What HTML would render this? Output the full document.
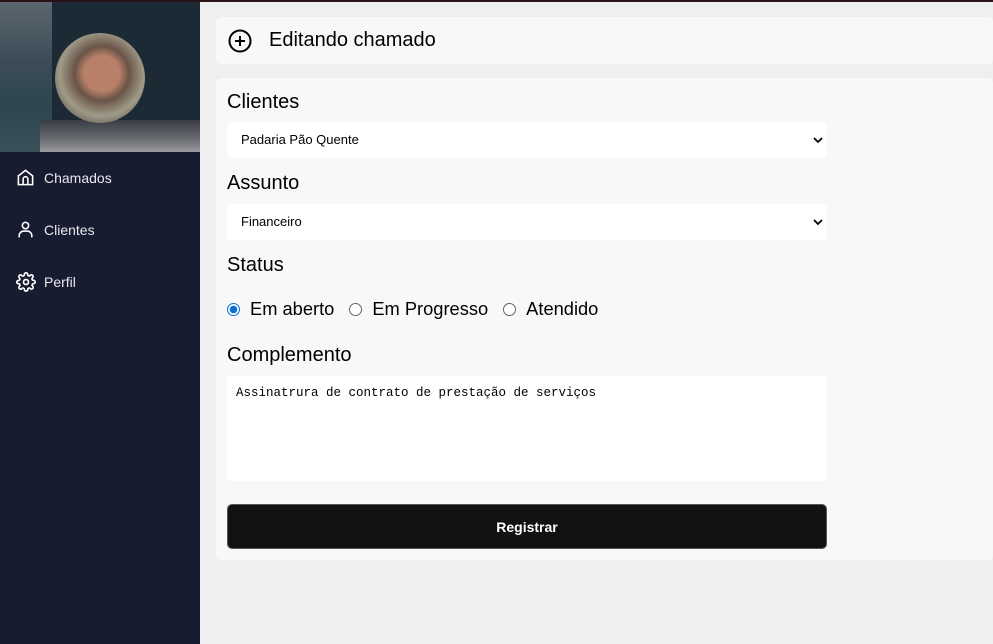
<!DOCTYPE html>
<html><head><meta charset="utf-8"><style>
*{box-sizing:border-box;margin:0;padding:0}
body{width:993px;height:644px;overflow:hidden;background:#efefef;font-family:"Liberation Sans",Arial,sans-serif;position:relative}
.topbar{position:absolute;left:0;top:0;width:993px;height:2px;background:#2a1418}
.side{position:absolute;left:0;top:0;width:200px;height:644px;background:#181c30}
.hero{position:absolute;left:0;top:2px;width:200px;height:150px;background:linear-gradient(180deg,#5a6670 0%,#3c4c56 40%,#2d4650 70%,#3a5058 100%);overflow:hidden}
.screen{position:absolute;left:52px;top:0;width:148px;height:118px;background:#1c2a36}
.kb{position:absolute;left:40px;top:118px;width:160px;height:32px;background:linear-gradient(180deg,#3a3c44 0%,#6a6c72 60%,#9a9ca0 100%)}
.avatar{position:absolute;left:55px;top:31px;width:90px;height:90px;border-radius:50%;background:radial-gradient(circle at 52% 45%,#b88068 0 26%,#6a5448 40%,#a09a88 62%,#2a2a2a 100%)}
.nav{position:absolute;left:16px;color:#e8e8ee;font-size:14px;display:flex;align-items:center;gap:9px}
.card{position:absolute;left:216px;width:777px;background:#f8f8f8;border-radius:5px}
.title{top:17px;height:47px;display:flex;align-items:center;padding-left:12px;font-size:20px;color:#000;gap:17px}
.form{top:78px;height:482px}
.lbl{position:absolute;left:11px;font-size:20px;color:#000}
.sel{position:absolute;left:11px;width:600px;height:36px;background:#fff;border-radius:4px;font-size:13px;padding-left:14px;line-height:36px;color:#000}
.sel svg{position:absolute;right:4px;top:13px}
.radio{position:absolute;top:220px;left:11px;font-size:18.3px;display:flex;align-items:center}
.r{width:13px;height:13px;border-radius:50%;border:1px solid #666;background:#fff;display:inline-block;margin-right:10px}
.r.on{border:1px solid #0b6fd6;background:radial-gradient(circle,#0b6fd6 0 3.5px,#fff 4px)}
.ta{position:absolute;left:11px;top:298px;width:600px;height:105px;background:#fff;border-radius:4px;font-family:"Liberation Mono",monospace;font-size:12.5px;padding:10px 9px}
.btn{position:absolute;left:11px;top:426px;width:600px;height:45px;background:#121212;border-radius:5px;color:#fff;font-size:14px;font-weight:bold;display:flex;align-items:center;justify-content:center;border:1px solid #555}
</style></head><body>
<div class="side">
 <div class="hero"><div class="screen"></div><div class="kb"></div><div class="avatar"></div></div>
 <div class="nav" style="top:168px"><svg width="19" height="19" viewBox="0 0 24 24" fill="none" stroke="#fff" stroke-width="2"><path d="M3 10l9-7 9 7v11H3z"/><path d="M9 21v-7a3 3 0 0 1 6 0v7"/></svg>Chamados</div>
 <div class="nav" style="top:220px"><svg width="19" height="19" viewBox="0 0 24 24" fill="none" stroke="#fff" stroke-width="2"><circle cx="12" cy="7" r="4"/><path d="M4 22v-2a6 6 0 0 1 6-6h4a6 6 0 0 1 6 6v2"/></svg>Clientes</div>
 <div class="nav" style="top:272px;gap:8px"><svg width="20" height="20" viewBox="0 0 24 24" fill="none" stroke="#fff" stroke-width="2"><circle cx="12" cy="12" r="3"/><path d="M19.4 15a1.7 1.7 0 0 0 .3 1.8l.1.1a2 2 0 1 1-2.8 2.8l-.1-.1a1.7 1.7 0 0 0-1.8-.3 1.7 1.7 0 0 0-1 1.5V21a2 2 0 1 1-4 0v-.1a1.7 1.7 0 0 0-1.1-1.5 1.7 1.7 0 0 0-1.8.3l-.1.1a2 2 0 1 1-2.8-2.8l.1-.1a1.7 1.7 0 0 0 .3-1.8 1.7 1.7 0 0 0-1.5-1H3a2 2 0 1 1 0-4h.1a1.7 1.7 0 0 0 1.5-1.1 1.7 1.7 0 0 0-.3-1.8l-.1-.1a2 2 0 1 1 2.8-2.8l.1.1a1.7 1.7 0 0 0 1.8.3H9a1.7 1.7 0 0 0 1-1.5V3a2 2 0 1 1 4 0v.1a1.7 1.7 0 0 0 1 1.5 1.7 1.7 0 0 0 1.8-.3l.1-.1a2 2 0 1 1 2.8 2.8l-.1.1a1.7 1.7 0 0 0-.3 1.8V9a1.7 1.7 0 0 0 1.5 1H21a2 2 0 1 1 0 4h-.1a1.7 1.7 0 0 0-1.5 1z"/></svg>Perfil</div>
</div>
<div class="topbar"></div>
<div class="card title"><svg width="24" height="24" viewBox="0 0 24 24" fill="none" stroke="#000" stroke-width="2"><circle cx="12" cy="12" r="10.5"/><path d="M12 7v10M7 12h10"/></svg>Editando chamado</div>
<div class="card form">
 <div class="lbl" style="top:13px">Clientes</div>
 <div class="sel" style="top:44px">Padaria Pão Quente<svg width="10" height="10" viewBox="0 0 10 10"><path d="M1 3l4 4 4-4" fill="none" stroke="#000" stroke-width="1.8"/></svg></div>
 <div class="lbl" style="top:94px">Assunto</div>
 <div class="sel" style="top:126px">Financeiro<svg width="10" height="10" viewBox="0 0 10 10"><path d="M1 3l4 4 4-4" fill="none" stroke="#000" stroke-width="1.8"/></svg></div>
 <div class="lbl" style="top:176px">Status</div>
 <div class="radio"><span class="r on"></span>Em aberto<span class="r" style="margin-left:15px"></span>Em Progresso<span class="r" style="margin-left:15px"></span>Atendido</div>
 <div class="lbl" style="top:266px">Complemento</div>
 <div class="ta">Assinatrura de contrato de prestação de serviços</div>
 <div class="btn">Registrar</div>
</div>
</body></html>
